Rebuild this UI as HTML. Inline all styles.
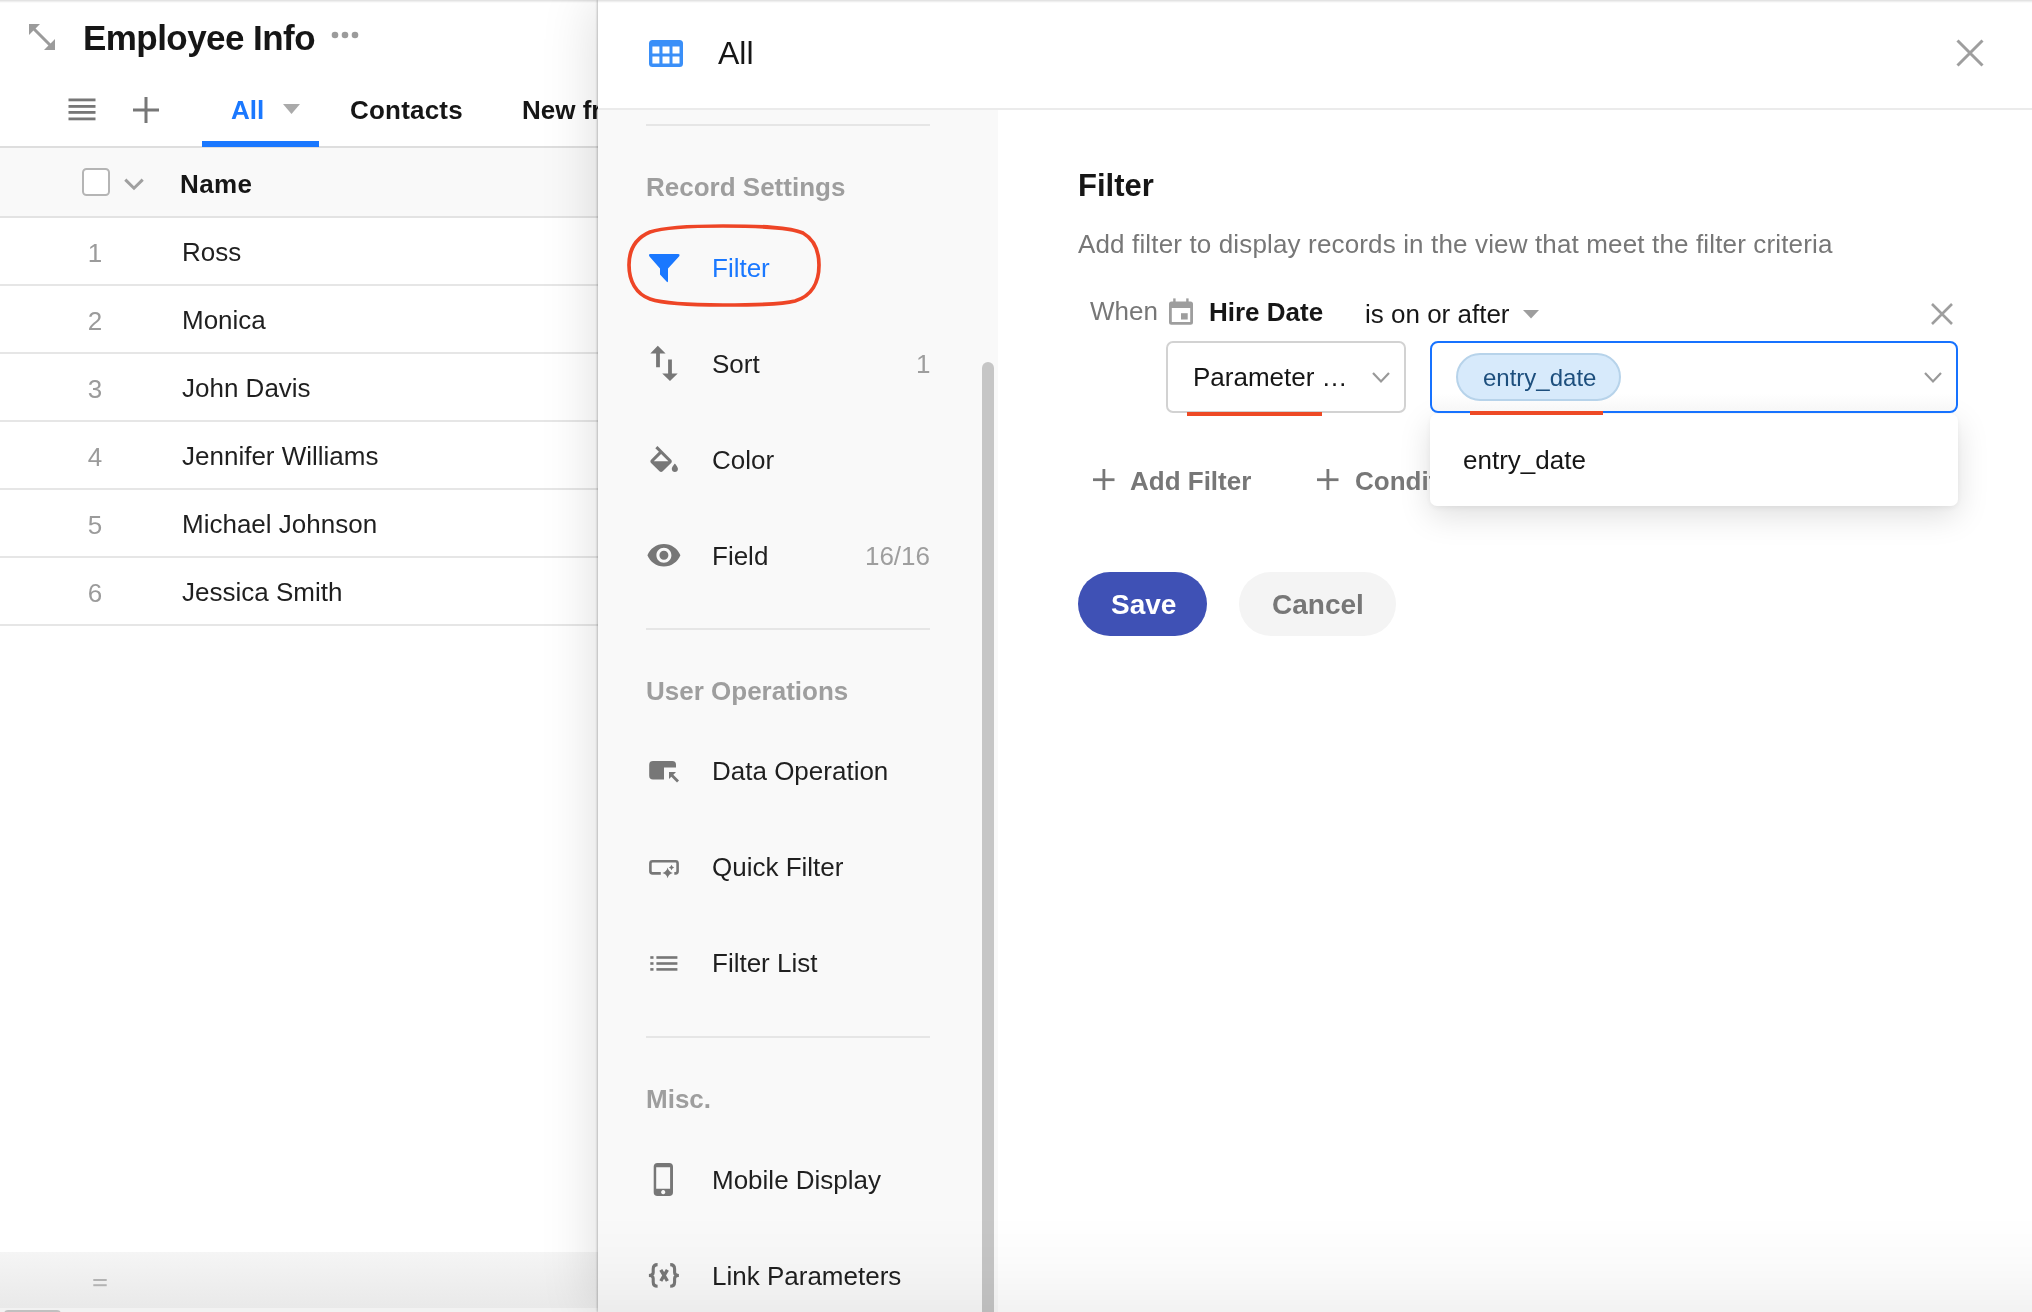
<!DOCTYPE html>
<html><head><meta charset="utf-8">
<style>
*{box-sizing:border-box;margin:0;padding:0}
html,body{width:2032px;height:1312px;overflow:hidden;background:#fff;font-family:"Liberation Sans",sans-serif;color:#1f1f1f;position:relative}
.abs{position:absolute}
.t{position:absolute;white-space:nowrap;line-height:1;will-change:transform}
svg{position:absolute;overflow:visible}
</style></head>
<body>
<div class="abs" style="left:0;top:0;width:600px;height:1312px;background:#fff"></div>
<svg style="left:28px;top:23px" width="28" height="28" viewBox="0 0 28 28">
<path d="M1 1 L12 1 L7.56 5.44 L22.56 20.44 L27 16 L27 27 L16 27 L20.44 22.56 L5.44 7.56 L1 12 Z" fill="#9b9b9b"/></svg>
<div class="t" style="left:82.5px;top:20.47px;font-size:35px;font-weight:bold;color:#161616;letter-spacing:-0.55px">Employee Info</div>
<svg style="left:331px;top:31px" width="30" height="8" viewBox="0 0 30 8">
<circle cx="4" cy="4" r="3.3" fill="#9b9b9b"/><circle cx="14" cy="4" r="3.3" fill="#9b9b9b"/><circle cx="24" cy="4" r="3.3" fill="#9b9b9b"/></svg>
<svg style="left:68px;top:98px" width="28" height="24" viewBox="0 0 28 24">
<rect x="0.5" y="0.5" width="27" height="2.8" fill="#777"/><rect x="0.5" y="7" width="27" height="2.8" fill="#777"/>
<rect x="0.5" y="13" width="27" height="2.8" fill="#777"/><rect x="0.5" y="19.5" width="27" height="2.8" fill="#777"/></svg>
<svg style="left:133px;top:97px" width="26" height="26" viewBox="0 0 26 26">
<rect x="11.5" y="0" width="3" height="26" fill="#777"/><rect x="0" y="11.5" width="26" height="3" fill="#777"/></svg>
<div class="t" style="left:231px;top:96.89px;font-size:26px;font-weight:bold;color:#1a78ff;">All</div>
<svg style="left:283px;top:104px" width="17" height="10" viewBox="0 0 17 10"><path d="M0 0 L17 0 L8.5 10 Z" fill="#aaa"/></svg>
<div class="t" style="left:349.5px;top:96.89px;font-size:26px;font-weight:bold;color:#161616;letter-spacing:0.2px">Contacts</div>
<div class="t" style="left:522px;top:96.89px;font-size:26px;font-weight:bold;color:#161616;">New fr</div>
<div class="abs" style="left:0;top:146px;width:600px;height:72px;background:#f9f9f9;border-top:2px solid #dedede;border-bottom:2px solid #e3e3e3"></div>
<div class="abs" style="left:202px;top:141px;width:117px;height:6px;background:#1a78ff"></div>
<div class="abs" style="left:82px;top:168px;width:28px;height:28px;border:2px solid #b5b5b5;border-radius:4.5px;background:#fff"></div>
<svg style="left:124px;top:178px" width="20" height="12" viewBox="0 0 20 12"><path d="M1.3 1.6 L10 10.2 L18.7 1.6" stroke="#a0a0a0" stroke-width="3" fill="none"/></svg>
<div class="t" style="left:180px;top:170.89px;font-size:26px;font-weight:bold;color:#161616;letter-spacing:0.4px">Name</div>
<div class="abs" style="left:0;top:284px;width:600px;height:2px;background:#e6e6e6"></div>
<div class="t" style="left:60px;width:70px;text-align:center;top:239.50px;font-size:26px;color:#9b9b9b">1</div>
<div class="t" style="left:182px;top:239.49px;font-size:26px;font-weight:normal;color:#1f1f1f;">Ross</div>
<div class="abs" style="left:0;top:352px;width:600px;height:2px;background:#e6e6e6"></div>
<div class="t" style="left:60px;width:70px;text-align:center;top:307.50px;font-size:26px;color:#9b9b9b">2</div>
<div class="t" style="left:182px;top:307.49px;font-size:26px;font-weight:normal;color:#1f1f1f;">Monica</div>
<div class="abs" style="left:0;top:420px;width:600px;height:2px;background:#e6e6e6"></div>
<div class="t" style="left:60px;width:70px;text-align:center;top:375.50px;font-size:26px;color:#9b9b9b">3</div>
<div class="t" style="left:182px;top:375.49px;font-size:26px;font-weight:normal;color:#1f1f1f;">John Davis</div>
<div class="abs" style="left:0;top:488px;width:600px;height:2px;background:#e6e6e6"></div>
<div class="t" style="left:60px;width:70px;text-align:center;top:443.50px;font-size:26px;color:#9b9b9b">4</div>
<div class="t" style="left:182px;top:443.49px;font-size:26px;font-weight:normal;color:#1f1f1f;">Jennifer Williams</div>
<div class="abs" style="left:0;top:556px;width:600px;height:2px;background:#e6e6e6"></div>
<div class="t" style="left:60px;width:70px;text-align:center;top:511.50px;font-size:26px;color:#9b9b9b">5</div>
<div class="t" style="left:182px;top:511.49px;font-size:26px;font-weight:normal;color:#1f1f1f;">Michael Johnson</div>
<div class="abs" style="left:0;top:624px;width:600px;height:2px;background:#e6e6e6"></div>
<div class="t" style="left:60px;width:70px;text-align:center;top:579.50px;font-size:26px;color:#9b9b9b">6</div>
<div class="t" style="left:182px;top:579.49px;font-size:26px;font-weight:normal;color:#1f1f1f;">Jessica Smith</div>
<div class="abs" style="left:0;top:1252px;width:600px;height:56px;background:linear-gradient(#f5f5f5,#e9e9e9)"></div>
<div class="abs" style="left:0;top:1308px;width:600px;height:4px;background:#f2f2f2"></div>
<svg style="left:93px;top:1279px" width="14" height="8" viewBox="0 0 14 8"><rect x="0.3" y="0" width="13.4" height="2" fill="#b3b3b3"/><rect x="0.3" y="5.2" width="13.4" height="2" fill="#b3b3b3"/></svg>
<div class="abs" style="left:4px;top:1310px;width:57px;height:8px;border-radius:4px;background:#c0c0c0"></div>
<div class="abs" style="left:598px;top:0;width:1434px;height:1312px;background:#fff;box-shadow:-6px 0 50px rgba(0,0,0,0.12),-1px 0 2px rgba(0,0,0,0.22)"></div>
<div class="abs" style="left:598px;top:108px;width:1434px;height:2px;background:#ebebeb"></div>
<svg style="left:649px;top:39.5px" width="34" height="27" viewBox="0 0 34 27">
<rect x="0" y="0" width="34" height="27" rx="3.5" fill="#3a8ff8"/>
<rect x="3.4" y="6.5" width="7" height="7" fill="#fff"/><rect x="13.5" y="6.5" width="7" height="7" fill="#fff"/><rect x="23.5" y="6.5" width="7" height="7" fill="#fff"/>
<rect x="3.4" y="16.5" width="7" height="7" fill="#fff"/><rect x="13.5" y="16.5" width="7" height="7" fill="#fff"/><rect x="23.5" y="16.5" width="7" height="7" fill="#fff"/>
</svg>
<div class="t" style="left:718px;top:36.81px;font-size:32px;font-weight:normal;color:#161616;">All</div>
<svg style="left:1956px;top:39px" width="28" height="28" viewBox="0 0 28 28"><path d="M1.5 1.5 L26.5 26.5 M26.5 1.5 L1.5 26.5" stroke="#9e9e9e" stroke-width="3"/></svg>
<div class="abs" style="left:598px;top:110px;width:400px;height:1202px;background:#f9f9f9"></div>
<div class="abs" style="left:646px;top:123.5px;width:284px;height:2px;background:#e6e6e6"></div>
<div class="abs" style="left:646px;top:628px;width:284px;height:2px;background:#e6e6e6"></div>
<div class="abs" style="left:646px;top:1036px;width:284px;height:2px;background:#e6e6e6"></div>
<div class="abs" style="left:982px;top:362px;width:12px;height:960px;border-radius:6px;background:#c6c6c6"></div>
<div class="t" style="left:646px;top:174.29px;font-size:26px;font-weight:bold;color:#9e9e9e;">Record Settings</div>
<div class="t" style="left:646px;top:678.19px;font-size:26px;font-weight:bold;color:#9e9e9e;">User Operations</div>
<div class="t" style="left:646px;top:1086.19px;font-size:26px;font-weight:bold;color:#9e9e9e;">Misc.</div>
<div class="t" style="left:712px;top:254.79px;font-size:26px;font-weight:normal;color:#1a78ff;">Filter</div>
<div class="t" style="left:712px;top:350.59px;font-size:26px;font-weight:normal;color:#1f1f1f;">Sort</div>
<div class="t" style="left:712px;top:446.59px;font-size:26px;font-weight:normal;color:#1f1f1f;">Color</div>
<div class="t" style="left:712px;top:542.59px;font-size:26px;font-weight:normal;color:#1f1f1f;">Field</div>
<div class="t" style="left:712px;top:758.49px;font-size:26px;font-weight:normal;color:#1f1f1f;">Data Operation</div>
<div class="t" style="left:712px;top:854.49px;font-size:26px;font-weight:normal;color:#1f1f1f;">Quick Filter</div>
<div class="t" style="left:712px;top:950.49px;font-size:26px;font-weight:normal;color:#1f1f1f;">Filter List</div>
<div class="t" style="left:712px;top:1166.99px;font-size:26px;font-weight:normal;color:#1f1f1f;">Mobile Display</div>
<div class="t" style="left:712px;top:1262.99px;font-size:26px;font-weight:normal;color:#1f1f1f;">Link Parameters</div>
<div class="t" style="left:916px;top:350.59px;font-size:26px;font-weight:normal;color:#9e9e9e;">1</div>
<div class="t" style="left:830px;width:100px;text-align:right;top:542.59px;font-size:26px;color:#9e9e9e">16/16</div>
<svg style="left:0;top:0" width="2032" height="1312" viewBox="0 0 2032 1312">
<path d="M650.5 254 L678 254 Q680.5 254 679 256.5 L668 268.5 L668 281 Q668 283 666.5 281.5 L660 274.5 L660 268.5 L649.5 256.5 Q648 254 650.5 254 Z" fill="#1a78ff"/>
<path d="M657.8 345.7 L665.6 353.5 L659.9 353.5 L659.9 367.2 L656.1 367.2 L656.1 353.5 L650.3 353.5 Z" fill="#777"/>
<path d="M670 381 L677.7 373.4 L671.9 373.4 L671.9 359.5 L668.1 359.5 L668.1 373.4 L662.2 373.4 Z" fill="#777"/>
<g transform="translate(645.8,446) scale(1.53)"><path d="M16.56 8.94L7.62 0 6.21 1.41l2.38 2.38-5.15 5.15c-.59.59-.59 1.54 0 2.12l5.5 5.5c.29.29.68.44 1.06.44s.77-.15 1.06-.44l5.5-5.5c.59-.58.59-1.53 0-2.12zM5.21 10L10 5.21 14.79 10H5.21zM19 11.5s-2 2.17-2 3.5c0 1.1.9 2 2 2s2-.9 2-2c0-1.33-2-3.5-2-3.5z" fill="#777"/></g>
<g transform="translate(645.9,537.35) scale(1.5)"><path d="M12 4.5C7 4.5 2.73 7.61 1 12c1.73 4.39 6 7.5 11 7.5s9.27-3.11 11-7.5c-1.73-4.39-6-7.5-11-7.5zM12 17c-2.76 0-5-2.24-5-5s2.24-5 5-5 5 2.24 5 5-2.24 5-5 5zm0-8c-1.66 0-3 1.34-3 3s1.34 3 3 3 3-1.34 3-3-1.34-3-3-3z" fill="#777"/></g>
<path d="M653 761 L672.3 761 Q676 761 676 764.7 L676 767.5 L664 767.5 L664 779.5 L653 779.5 Q649.2 779.5 649.2 775.7 L649.2 764.7 Q649.2 761 653 761 Z" fill="#777"/>
<path d="M669 772 L676 772 L673.3 774.7 L679 780.4 L677 782.4 L671.3 776.7 L669 779 Z" fill="#777"/>
<path d="M660.8 873.4 L652.5 873.4 Q650.4 873.4 650.4 871.3 L650.4 863.4 Q650.4 861.3 652.5 861.3 L675.6 861.3 Q677.6 861.3 677.6 863.4 L677.6 871.3 Q677.6 873.4 675.6 873.4 L674.3 873.4" stroke="#777" stroke-width="2.6" fill="none"/>
<path d="M667.6 867.6 Q668.6 872 672.8 873 Q668.6 874 667.6 878.3 Q666.6 874 662.4 873 Q666.6 872 667.6 867.6 Z" fill="#777"/>
<path d="M671.5 864.8 Q672 867 674.2 867.5 Q672 868 671.5 870.2 Q671 868 668.8 867.5 Q671 867 671.5 864.8 Z" fill="#777"/>
<rect x="650.3" y="956.2" width="3.2" height="2.6" fill="#777"/><rect x="656.4" y="956.2" width="21" height="2.6" fill="#777"/>
<rect x="650.3" y="962.2" width="3.2" height="2.6" fill="#777"/><rect x="656.4" y="962.2" width="21" height="2.6" fill="#777"/>
<rect x="650.3" y="968.1" width="3.2" height="2.6" fill="#777"/><rect x="656.4" y="968.1" width="21" height="2.6" fill="#777"/>
<path fill-rule="evenodd" d="M657.5 1163 L669.2 1163 Q673 1163 673 1166.8 L673 1192.2 Q673 1196 669.2 1196 L657.5 1196 Q653.7 1196 653.7 1192.2 L653.7 1166.8 Q653.7 1163 657.5 1163 Z M656.2 1167.2 L656.2 1188.7 L670.1 1188.7 L670.1 1167.2 Z M663.2 1190.1 A2.1 2.1 0 1 0 663.21 1190.1 Z" fill="#777"/>
<path d="M657.6 1264.6 C654.2 1264.6 653.2 1266.8 653.2 1269 L653.2 1272.6 C653.2 1274.6 651.5 1275.5 648.9 1275.5 C651.5 1275.5 653.2 1276.5 653.2 1278.5 L653.2 1282 C653.2 1284.2 654.2 1286.3 657.6 1286.3" stroke="#777" stroke-width="3.1" fill="none"/>
<path d="M670.2 1264.6 C673.6 1264.6 674.6 1266.8 674.6 1269 L674.6 1272.6 C674.6 1274.6 676.3 1275.5 678.9 1275.5 C676.3 1275.5 674.6 1276.5 674.6 1278.5 L674.6 1282 C674.6 1284.2 673.6 1286.3 670.2 1286.3" stroke="#777" stroke-width="3.1" fill="none"/>
<path d="M660.8 1269.8 L667.4 1281 M667.4 1269.8 L660.8 1281" stroke="#777" stroke-width="3.4" fill="none"/>
</svg>
<svg style="left:0;top:0" width="2032" height="1312" viewBox="0 0 2032 1312">
<path d="M723 226 C760 226 790 227 803 233 C815 240 819 252 819 265 C819 282 812 296 795 301 C780 305 750 305 723 305 C690 305 665 304 650 299 C636 294 629 281 629 265 C629 250 636 238 650 232 C665 227 690 226 723 226 Z" stroke="#ee4526" stroke-width="3.7" fill="none"/>
</svg>
<div class="t" style="left:1078px;top:169.96px;font-size:31px;font-weight:bold;color:#161616;">Filter</div>
<div class="t" style="left:1078px;top:230.79px;font-size:26px;font-weight:normal;color:#777;letter-spacing:0.145px">Add filter to display records in the view that meet the filter criteria</div>
<div class="t" style="left:1090px;top:297.79px;font-size:26px;font-weight:normal;color:#777;">When</div>
<svg style="left:1169px;top:298px" width="24" height="27" viewBox="0 0 24 27">
<path fill-rule="evenodd" d="M2.5 3.4 L21.5 3.4 Q24 3.4 24 5.9 L24 24.2 Q24 26.7 21.5 26.7 L2.5 26.7 Q0 26.7 0 24.2 L0 5.9 Q0 3.4 2.5 3.4 Z M2.8 10 L2.8 23.9 L21.2 23.9 L21.2 10 Z" fill="#9e9e9e"/>
<rect x="4.2" y="0.4" width="2.4" height="4" fill="#9e9e9e"/><rect x="17.2" y="0.4" width="2.4" height="4" fill="#9e9e9e"/>
<rect x="12" y="15.2" width="6.7" height="6.3" fill="#9e9e9e"/>
</svg>
<div class="t" style="left:1209px;top:299.09px;font-size:26px;font-weight:bold;color:#161616;">Hire Date</div>
<div class="t" style="left:1365px;top:301.09px;font-size:26px;font-weight:normal;color:#161616;">is on or after</div>
<svg style="left:1523px;top:310px" width="16" height="9" viewBox="0 0 16 9"><path d="M0 0 L16 0 L8 8.5 Z" fill="#9e9e9e"/></svg>
<svg style="left:1931px;top:303px" width="22" height="22" viewBox="0 0 22 22"><path d="M1 1 L21 21 M21 1 L1 21" stroke="#9e9e9e" stroke-width="2.6"/></svg>
<div class="abs" style="left:1166px;top:341px;width:240px;height:72px;border:2px solid #d2d2d2;border-radius:7px;background:#fff"></div>
<div class="t" style="left:1193px;top:364.09px;font-size:26px;font-weight:normal;color:#161616;">Parameter …</div>
<svg style="left:1372px;top:372px" width="18" height="11" viewBox="0 0 18 11"><path d="M1 1 L9 9.5 L17 1" stroke="#999" stroke-width="2.2" fill="none"/></svg>
<div class="abs" style="left:1430px;top:414px;width:528px;height:92px;border-radius:7px;background:#fff;box-shadow:0 10px 32px rgba(0,0,0,0.13),0 2px 6px rgba(0,0,0,0.06)"></div>
<div class="abs" style="left:1430px;top:341px;width:528px;height:72px;border:2.4px solid #1672ff;border-radius:8px;background:linear-gradient(#fff 75%,#f7f7f7)"></div>
<div class="abs" style="left:1456px;top:353px;width:165px;height:48px;border:2px solid #b7d3ea;border-radius:24px;background:#d7eafb"></div>
<div class="t" style="left:1482.7px;top:365.68px;font-size:24px;font-weight:normal;color:#1d4f7d;">entry_date</div>
<svg style="left:1924px;top:372px" width="18" height="11" viewBox="0 0 18 11"><path d="M1 1 L9 9.5 L17 1" stroke="#999" stroke-width="2.2" fill="none"/></svg>
<div class="t" style="left:1462.5px;top:447.09px;font-size:26px;font-weight:normal;color:#161616;">entry_date</div>
<div class="abs" style="left:1187px;top:411.5px;width:135px;height:4px;background:#ee4a25"></div>
<div class="abs" style="left:1470px;top:411px;width:133px;height:4px;background:#ee4a25"></div>
<svg style="left:1093px;top:469px" width="22" height="22" viewBox="0 0 22 22"><rect x="9.5" y="0" width="2.8" height="21" fill="#777"/><rect x="0" y="9.3" width="21.5" height="2.8" fill="#777"/></svg>
<div class="t" style="left:1130px;top:468.09px;font-size:26px;font-weight:bold;color:#777;">Add Filter</div>
<svg style="left:1317px;top:469px" width="22" height="22" viewBox="0 0 22 22"><rect x="9.5" y="0" width="2.8" height="21" fill="#777"/><rect x="0" y="9.3" width="21.5" height="2.8" fill="#777"/></svg>
<div class="abs" style="left:1354px;top:440px;width:76px;height:70px;overflow:hidden"><div class="t" style="left:0.5px;top:28.09px;font-size:26px;font-weight:bold;color:#777;">Conditions</div>
</div>
<div class="abs" style="left:1078px;top:572px;width:129px;height:64px;border-radius:32px;background:#3f51b5"></div>
<div class="t" style="left:1110.5px;top:590.60px;font-size:28px;font-weight:bold;color:#fff;">Save</div>
<div class="abs" style="left:1239px;top:572px;width:157px;height:64px;border-radius:32px;background:#f4f4f4"></div>
<div class="t" style="left:1271.5px;top:590.60px;font-size:28px;font-weight:bold;color:#777;">Cancel</div>
<div class="abs" style="left:0;top:0;width:2032px;height:3px;background:linear-gradient(rgba(0,0,0,0.13),rgba(0,0,0,0))"></div>
<div class="abs" style="left:598px;top:1215px;width:1434px;height:97px;background:linear-gradient(rgba(0,0,0,0) 0%,rgba(0,0,0,0.01) 40%,rgba(0,0,0,0.03) 75%,rgba(0,0,0,0.052) 100%)"></div>
</body></html>
